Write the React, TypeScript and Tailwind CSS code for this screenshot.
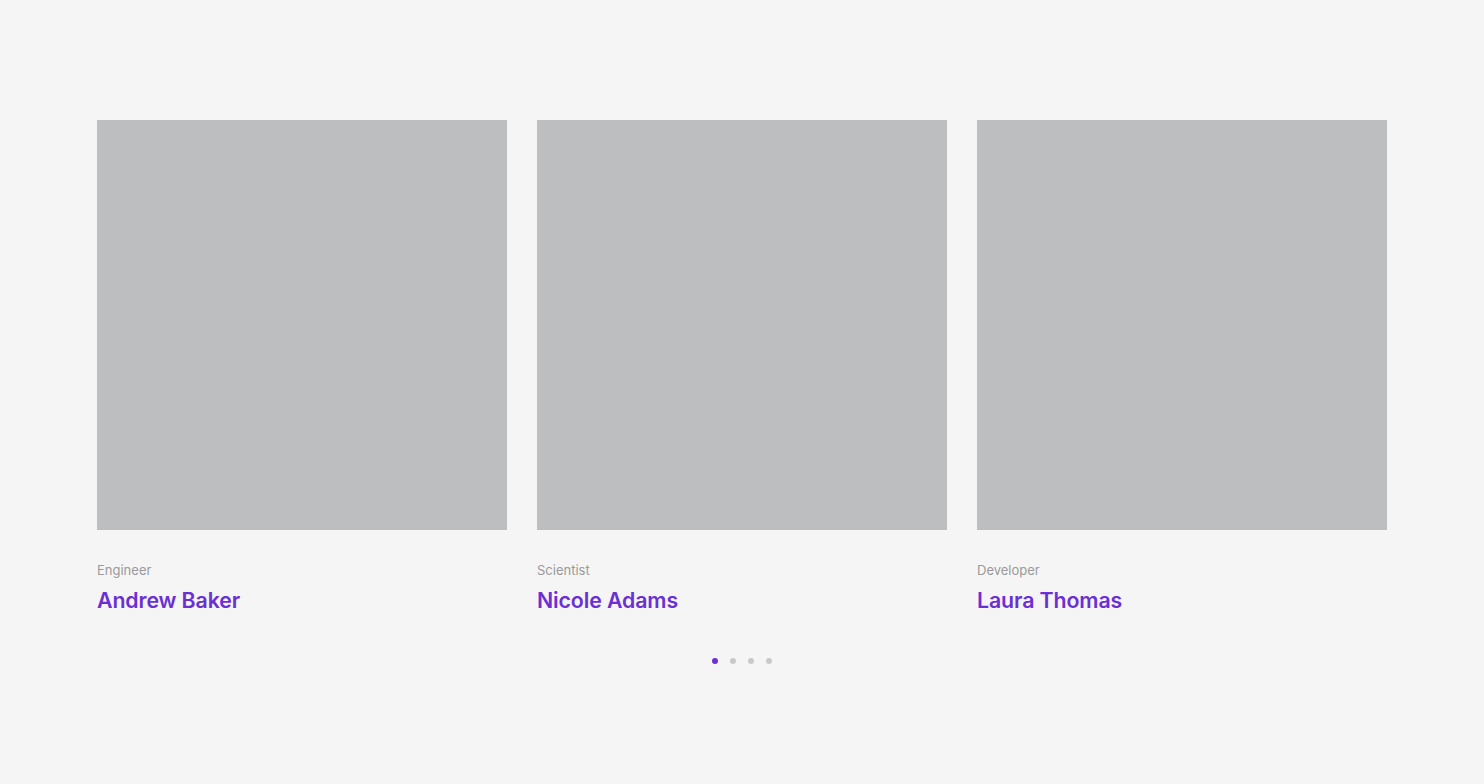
const people = [
  { role: 'Engineer', name: 'Andrew Baker' },
  { role: 'Scientist', name: 'Nicole Adams' },
  { role: 'Developer', name: 'Laura Thomas' },
];

export default function App() {
  return (
    <div className="min-h-[784px] w-full bg-[#f5f5f5] pt-[120px] font-['Inter',sans-serif]">
      <div className="mx-auto flex w-[1290px] gap-[30px]">
        {people.map((p) => (
          <div key={p.name} className="w-[410px]">
            <div className="h-[410px] w-[410px] bg-[#bdbebf]" />
            <div className="mt-[31px] text-[13px] leading-[18px] text-[#9a9a9a]">{p.role}</div>
            <div className="mt-[8px] text-[21.3px] font-semibold leading-[26px] tracking-[-0.1px] text-[#6a30d4]">
              {p.name}
            </div>
          </div>
        ))}
      </div>
      <div className="mt-[45px] flex justify-center gap-[12px]">
        <span className="h-[6px] w-[6px] rounded-full bg-[#6a30d4]" />
        <span className="h-[6px] w-[6px] rounded-full bg-[#c9c9c9]" />
        <span className="h-[6px] w-[6px] rounded-full bg-[#c9c9c9]" />
        <span className="h-[6px] w-[6px] rounded-full bg-[#c9c9c9]" />
      </div>
    </div>
  );
}
